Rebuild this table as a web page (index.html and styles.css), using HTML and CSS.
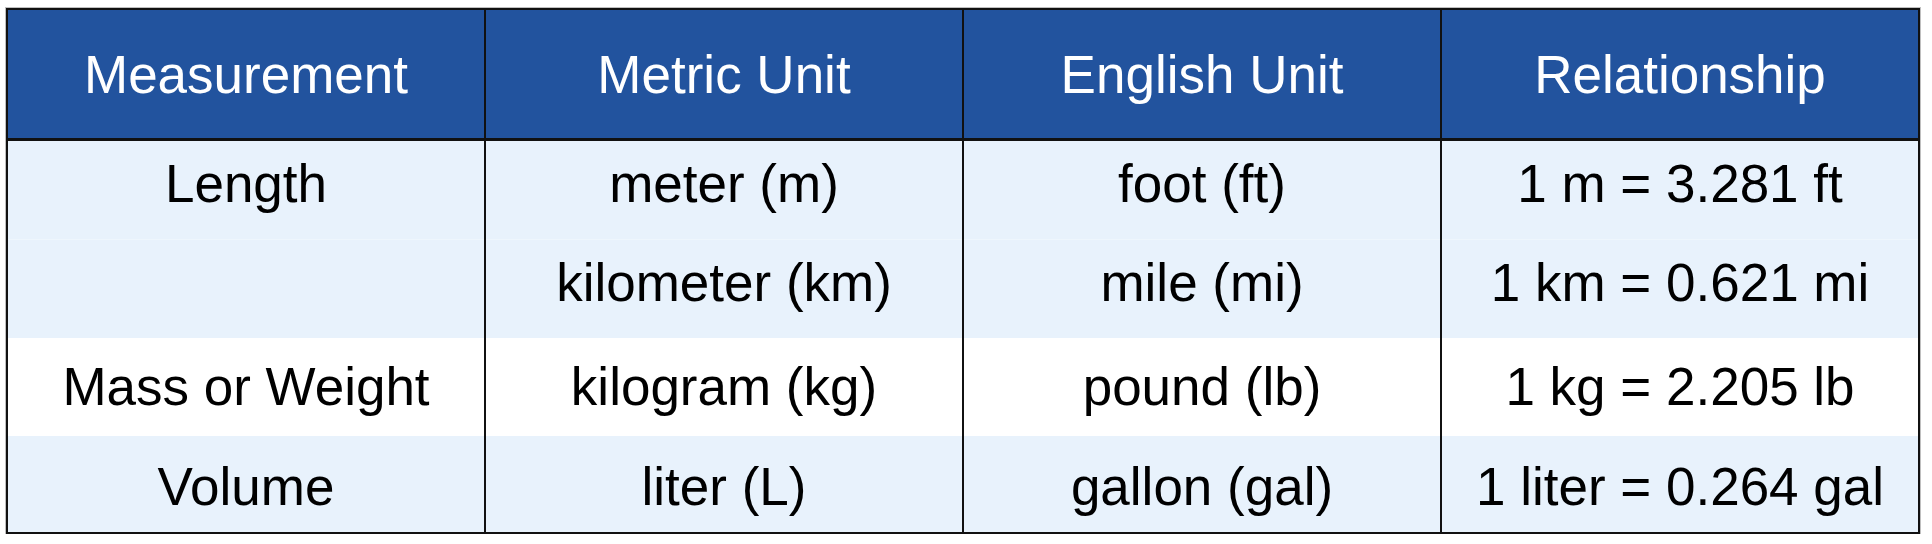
FILE: index.html
```html
<!DOCTYPE html>
<html lang="en">
<head>
<meta charset="utf-8">
<title>Measurement Units</title>
<link rel="stylesheet" href="styles.css">
</head>
<body>
<table class="units">
  <colgroup>
    <col class="col"><col class="col"><col class="col"><col class="col">
  </colgroup>
  <thead>
    <tr class="head-row">
      <th>Measurement</th>
      <th>Metric Unit</th>
      <th>English Unit</th>
      <th>Relationship</th>
    </tr>
  </thead>
  <tbody>
    <tr class="row tint r1">
      <td>Length</td>
      <td>meter (m)</td>
      <td>foot (ft)</td>
      <td>1 m = 3.281 ft</td>
    </tr>
    <tr class="row tint r2">
      <td></td>
      <td>kilometer (km)</td>
      <td>mile (mi)</td>
      <td>1 km = 0.621 mi</td>
    </tr>
    <tr class="row plain r3">
      <td>Mass or Weight</td>
      <td>kilogram (kg)</td>
      <td>pound (lb)</td>
      <td>1 kg = 2.205 lb</td>
    </tr>
    <tr class="row tint r4">
      <td>Volume</td>
      <td>liter (L)</td>
      <td>gallon (gal)</td>
      <td>1 liter = 0.264 gal</td>
    </tr>
  </tbody>
</table>
</body>
</html>
```

FILE: styles.css
```css
html, body {
  margin: 0;
  padding: 0;
  background: #ffffff;
}

body {
  font-family: "Liberation Sans", Arial, sans-serif;
}

.units {
  margin: 8px 0 0 6px;
  width: 1914px;
  table-layout: fixed;
  border-collapse: collapse;
  border: 2px solid #111111;
  box-shadow: 0 0 0 1px rgba(0, 0, 0, 0.25);
}

.col {
  width: 25%;
}

.units th,
.units td {
  text-align: center;
  vertical-align: middle;
  font-size: 53px;
  font-weight: 400;
  line-height: 1;
  padding: 0;
  border-left: 2px solid #111111;
  border-right: 2px solid #111111;
  white-space: nowrap;
}

.head-row th {
  height: 127px;
  background: #22539e;
  color: #ffffff;
  padding-top: 1px;
  border-bottom: 3px solid #111111;
}

.row td {
  color: #000000;
  height: 85px;
  padding-bottom: 13px;
}

.row.r3 td {
  height: 97px;
  padding-bottom: 1px;
}

.row.r4 td {
  height: 92px;
  padding-top: 4px;
  padding-bottom: 0;
}

.tint td {
  background: #e8f2fc;
}

.plain td {
  background: #ffffff;
}

.r1 td {
  border-bottom: 1px solid #eef6fd;
}
```
